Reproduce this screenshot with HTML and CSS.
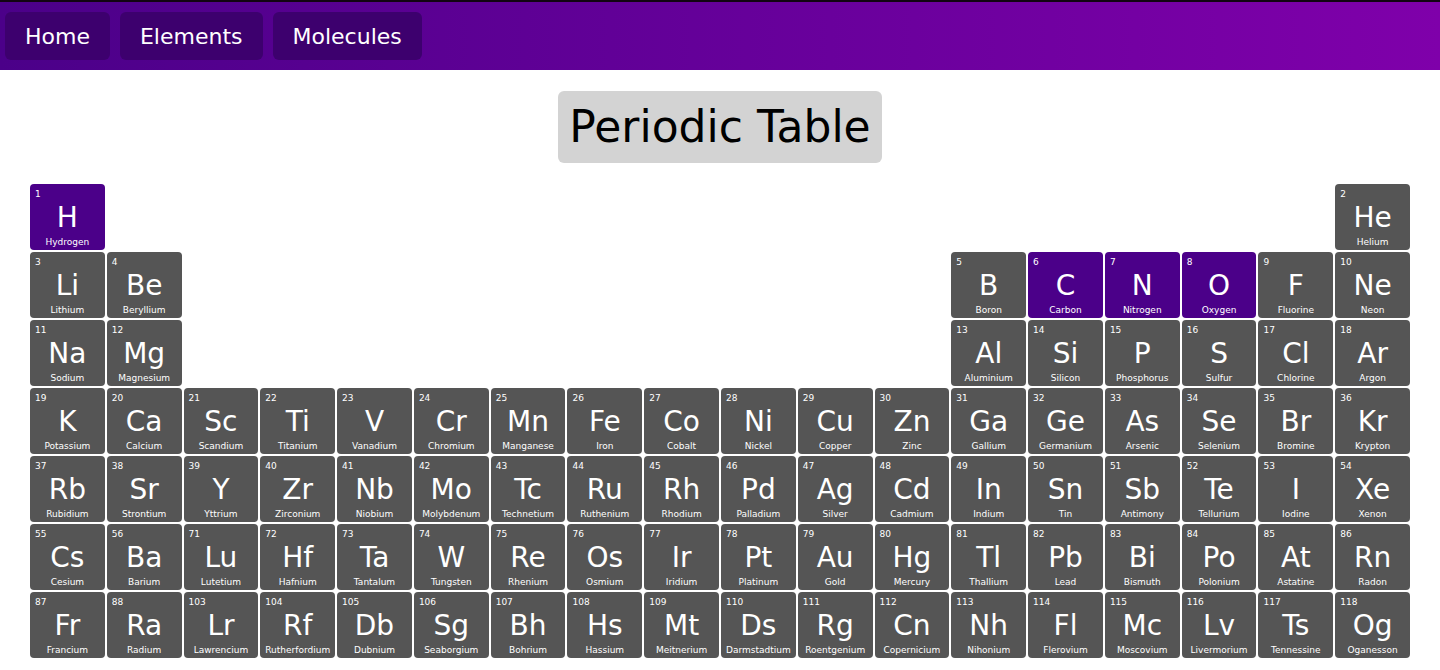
FILE: index.html
```html
<!DOCTYPE html>
<html>
<head>
  <meta name="viewport" content="width=device-width,initial-scale=1.0">
  <title>Periodic Table</title>
  <link rel="stylesheet" href="styles.css">
</head>
<body>
  <nav class="navbar">
    <a class="nav-link" href="#">Home</a>
    <a class="nav-link" href="#">Elements</a>
    <a class="nav-link" href="#">Molecules</a>
  </nav>

  <h1 class="page-title">Periodic Table</h1>

  <div class="table">
    <!-- row 1 -->
    <div class="element active"><span class="num">1</span><span class="sym">H</span><span class="name">Hydrogen</span></div>
    <div class="element last-col"><span class="num">2</span><span class="sym">He</span><span class="name">Helium</span></div>
    <!-- row 2 -->
    <div class="element"><span class="num">3</span><span class="sym">Li</span><span class="name">Lithium</span></div>
    <div class="element"><span class="num">4</span><span class="sym">Be</span><span class="name">Beryllium</span></div>
    <div class="element block-p"><span class="num">5</span><span class="sym">B</span><span class="name">Boron</span></div>
    <div class="element active"><span class="num">6</span><span class="sym">C</span><span class="name">Carbon</span></div>
    <div class="element active"><span class="num">7</span><span class="sym">N</span><span class="name">Nitrogen</span></div>
    <div class="element active"><span class="num">8</span><span class="sym">O</span><span class="name">Oxygen</span></div>
    <div class="element"><span class="num">9</span><span class="sym">F</span><span class="name">Fluorine</span></div>
    <div class="element"><span class="num">10</span><span class="sym">Ne</span><span class="name">Neon</span></div>
    <!-- row 3 -->
    <div class="element"><span class="num">11</span><span class="sym">Na</span><span class="name">Sodium</span></div>
    <div class="element"><span class="num">12</span><span class="sym">Mg</span><span class="name">Magnesium</span></div>
    <div class="element block-p"><span class="num">13</span><span class="sym">Al</span><span class="name">Aluminium</span></div>
    <div class="element"><span class="num">14</span><span class="sym">Si</span><span class="name">Silicon</span></div>
    <div class="element"><span class="num">15</span><span class="sym">P</span><span class="name">Phosphorus</span></div>
    <div class="element"><span class="num">16</span><span class="sym">S</span><span class="name">Sulfur</span></div>
    <div class="element"><span class="num">17</span><span class="sym">Cl</span><span class="name">Chlorine</span></div>
    <div class="element"><span class="num">18</span><span class="sym">Ar</span><span class="name">Argon</span></div>
    <!-- row 4 -->
    <div class="element"><span class="num">19</span><span class="sym">K</span><span class="name">Potassium</span></div>
    <div class="element"><span class="num">20</span><span class="sym">Ca</span><span class="name">Calcium</span></div>
    <div class="element"><span class="num">21</span><span class="sym">Sc</span><span class="name">Scandium</span></div>
    <div class="element"><span class="num">22</span><span class="sym">Ti</span><span class="name">Titanium</span></div>
    <div class="element"><span class="num">23</span><span class="sym">V</span><span class="name">Vanadium</span></div>
    <div class="element"><span class="num">24</span><span class="sym">Cr</span><span class="name">Chromium</span></div>
    <div class="element"><span class="num">25</span><span class="sym">Mn</span><span class="name">Manganese</span></div>
    <div class="element"><span class="num">26</span><span class="sym">Fe</span><span class="name">Iron</span></div>
    <div class="element"><span class="num">27</span><span class="sym">Co</span><span class="name">Cobalt</span></div>
    <div class="element"><span class="num">28</span><span class="sym">Ni</span><span class="name">Nickel</span></div>
    <div class="element"><span class="num">29</span><span class="sym">Cu</span><span class="name">Copper</span></div>
    <div class="element"><span class="num">30</span><span class="sym">Zn</span><span class="name">Zinc</span></div>
    <div class="element"><span class="num">31</span><span class="sym">Ga</span><span class="name">Gallium</span></div>
    <div class="element"><span class="num">32</span><span class="sym">Ge</span><span class="name">Germanium</span></div>
    <div class="element"><span class="num">33</span><span class="sym">As</span><span class="name">Arsenic</span></div>
    <div class="element"><span class="num">34</span><span class="sym">Se</span><span class="name">Selenium</span></div>
    <div class="element"><span class="num">35</span><span class="sym">Br</span><span class="name">Bromine</span></div>
    <div class="element"><span class="num">36</span><span class="sym">Kr</span><span class="name">Krypton</span></div>
    <!-- row 5 -->
    <div class="element"><span class="num">37</span><span class="sym">Rb</span><span class="name">Rubidium</span></div>
    <div class="element"><span class="num">38</span><span class="sym">Sr</span><span class="name">Strontium</span></div>
    <div class="element"><span class="num">39</span><span class="sym">Y</span><span class="name">Yttrium</span></div>
    <div class="element"><span class="num">40</span><span class="sym">Zr</span><span class="name">Zirconium</span></div>
    <div class="element"><span class="num">41</span><span class="sym">Nb</span><span class="name">Niobium</span></div>
    <div class="element"><span class="num">42</span><span class="sym">Mo</span><span class="name">Molybdenum</span></div>
    <div class="element"><span class="num">43</span><span class="sym">Tc</span><span class="name">Technetium</span></div>
    <div class="element"><span class="num">44</span><span class="sym">Ru</span><span class="name">Ruthenium</span></div>
    <div class="element"><span class="num">45</span><span class="sym">Rh</span><span class="name">Rhodium</span></div>
    <div class="element"><span class="num">46</span><span class="sym">Pd</span><span class="name">Palladium</span></div>
    <div class="element"><span class="num">47</span><span class="sym">Ag</span><span class="name">Silver</span></div>
    <div class="element"><span class="num">48</span><span class="sym">Cd</span><span class="name">Cadmium</span></div>
    <div class="element"><span class="num">49</span><span class="sym">In</span><span class="name">Indium</span></div>
    <div class="element"><span class="num">50</span><span class="sym">Sn</span><span class="name">Tin</span></div>
    <div class="element"><span class="num">51</span><span class="sym">Sb</span><span class="name">Antimony</span></div>
    <div class="element"><span class="num">52</span><span class="sym">Te</span><span class="name">Tellurium</span></div>
    <div class="element"><span class="num">53</span><span class="sym">I</span><span class="name">Iodine</span></div>
    <div class="element"><span class="num">54</span><span class="sym">Xe</span><span class="name">Xenon</span></div>
    <!-- row 6 -->
    <div class="element"><span class="num">55</span><span class="sym">Cs</span><span class="name">Cesium</span></div>
    <div class="element"><span class="num">56</span><span class="sym">Ba</span><span class="name">Barium</span></div>
    <div class="element"><span class="num">71</span><span class="sym">Lu</span><span class="name">Lutetium</span></div>
    <div class="element"><span class="num">72</span><span class="sym">Hf</span><span class="name">Hafnium</span></div>
    <div class="element"><span class="num">73</span><span class="sym">Ta</span><span class="name">Tantalum</span></div>
    <div class="element"><span class="num">74</span><span class="sym">W</span><span class="name">Tungsten</span></div>
    <div class="element"><span class="num">75</span><span class="sym">Re</span><span class="name">Rhenium</span></div>
    <div class="element"><span class="num">76</span><span class="sym">Os</span><span class="name">Osmium</span></div>
    <div class="element"><span class="num">77</span><span class="sym">Ir</span><span class="name">Iridium</span></div>
    <div class="element"><span class="num">78</span><span class="sym">Pt</span><span class="name">Platinum</span></div>
    <div class="element"><span class="num">79</span><span class="sym">Au</span><span class="name">Gold</span></div>
    <div class="element"><span class="num">80</span><span class="sym">Hg</span><span class="name">Mercury</span></div>
    <div class="element"><span class="num">81</span><span class="sym">Tl</span><span class="name">Thallium</span></div>
    <div class="element"><span class="num">82</span><span class="sym">Pb</span><span class="name">Lead</span></div>
    <div class="element"><span class="num">83</span><span class="sym">Bi</span><span class="name">Bismuth</span></div>
    <div class="element"><span class="num">84</span><span class="sym">Po</span><span class="name">Polonium</span></div>
    <div class="element"><span class="num">85</span><span class="sym">At</span><span class="name">Astatine</span></div>
    <div class="element"><span class="num">86</span><span class="sym">Rn</span><span class="name">Radon</span></div>
    <!-- row 7 -->
    <div class="element"><span class="num">87</span><span class="sym">Fr</span><span class="name">Francium</span></div>
    <div class="element"><span class="num">88</span><span class="sym">Ra</span><span class="name">Radium</span></div>
    <div class="element"><span class="num">103</span><span class="sym">Lr</span><span class="name">Lawrencium</span></div>
    <div class="element"><span class="num">104</span><span class="sym">Rf</span><span class="name">Rutherfordium</span></div>
    <div class="element"><span class="num">105</span><span class="sym">Db</span><span class="name">Dubnium</span></div>
    <div class="element"><span class="num">106</span><span class="sym">Sg</span><span class="name">Seaborgium</span></div>
    <div class="element"><span class="num">107</span><span class="sym">Bh</span><span class="name">Bohrium</span></div>
    <div class="element"><span class="num">108</span><span class="sym">Hs</span><span class="name">Hassium</span></div>
    <div class="element"><span class="num">109</span><span class="sym">Mt</span><span class="name">Meitnerium</span></div>
    <div class="element"><span class="num">110</span><span class="sym">Ds</span><span class="name">Darmstadtium</span></div>
    <div class="element"><span class="num">111</span><span class="sym">Rg</span><span class="name">Roentgenium</span></div>
    <div class="element"><span class="num">112</span><span class="sym">Cn</span><span class="name">Copernicium</span></div>
    <div class="element"><span class="num">113</span><span class="sym">Nh</span><span class="name">Nihonium</span></div>
    <div class="element"><span class="num">114</span><span class="sym">Fl</span><span class="name">Flerovium</span></div>
    <div class="element"><span class="num">115</span><span class="sym">Mc</span><span class="name">Moscovium</span></div>
    <div class="element"><span class="num">116</span><span class="sym">Lv</span><span class="name">Livermorium</span></div>
    <div class="element"><span class="num">117</span><span class="sym">Ts</span><span class="name">Tennessine</span></div>
    <div class="element"><span class="num">118</span><span class="sym">Og</span><span class="name">Oganesson</span></div>
  </div>
</body>
</html>
```

FILE: styles.css
```css
html {
  overflow: hidden;
}

body {
  margin: 0;
  background: #fff;
  font-family: "DejaVu Sans", Verdana, sans-serif;
}

.navbar {
  display: flex;
  gap: 10px;
  height: 70px;
  box-sizing: border-box;
  padding: 10px 5px;
  border-top: 2px solid #120412;
  background: linear-gradient(to right, #4b0089, #7f00aa);
}

.nav-link {
  display: flex;
  align-items: center;
  padding: 0 20px;
  height: 48px;
  border-radius: 6px;
  background: #3d006e;
  color: #fff;
  font-size: 22px;
  text-decoration: none;
}

.page-title {
  width: fit-content;
  margin: 21px auto;
  padding: 0 11px;
  height: 72px;
  line-height: 72px;
  border-radius: 6px;
  background: #d3d3d3;
  color: #000;
  font-size: 44px;
  font-weight: 400;
}

.table {
  display: grid;
  grid-template-columns: repeat(18, 1fr);
  grid-auto-rows: 66px;
  gap: 2px;
  margin: 0 30px;
}

.element {
  display: flex;
  flex-direction: column;
  align-items: center;
  min-width: 0;
  border-radius: 4px;
  background: #555;
  color: #fff;
}

.element.active {
  background: #4b0089;
}

.block-p {
  grid-column-start: 13;
}

.last-col {
  grid-column-start: 18;
}

.num {
  align-self: flex-start;
  margin: 5px 0 0 5px;
  height: 11px;
  line-height: 11px;
  font-size: 9px;
}

.sym {
  height: 35px;
  line-height: 35px;
  font-size: 28px;
}

.name {
  margin-top: 1px;
  font-size: 9px;
  line-height: 12px;
  white-space: nowrap;
}
```
